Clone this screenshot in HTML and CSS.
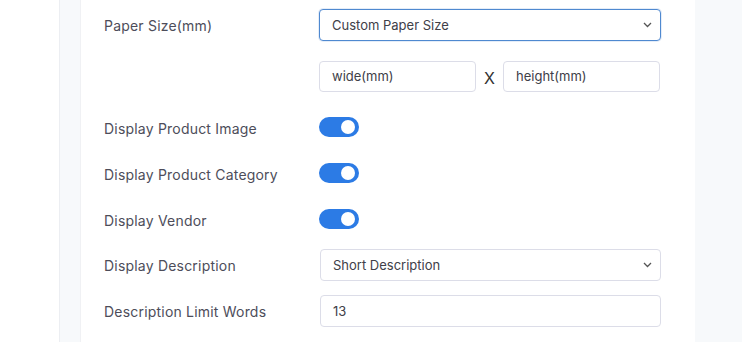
FILE: index.html
```html
<!DOCTYPE html>
<html lang="en">
<head>
  <meta charset="UTF-8" />
  <title>Label Settings</title>
  <link rel="stylesheet" href="styles.css">
</head>
<body>

  <div class="page">

    <!-- Left rail -->
    <div class="rail"></div>

    <!-- Main area -->
    <div class="main">
      <div class="card">

        <div class="row row-wide">
          <label class="label">Paper Size(mm)</label>
          <div class="control select-wrap">
            <select class="field select focused">
              <option>Custom Paper Size</option>
            </select>
            <svg class="chevron" width="9" height="6" viewBox="0 0 9 6"><path d="M1 1l3.5 3.5L8 1" fill="none" stroke="#555" stroke-width="1.3"/></svg>
          </div>
        </div>

        <div class="row row-wide">
          <span class="label"></span>
          <div class="control size-pair">
            <input class="field size" type="text" value="wide(mm)">
            <span class="times">X</span>
            <input class="field size" type="text" value="height(mm)">
          </div>
        </div>

        <div class="row switch-row">
          <label class="label">Display Product Image</label>
          <div class="control"><span class="toggle"></span></div>
        </div>

        <div class="row switch-row">
          <label class="label">Display Product Category</label>
          <div class="control"><span class="toggle"></span></div>
        </div>

        <div class="row switch-row">
          <label class="label">Display Vendor</label>
          <div class="control"><span class="toggle"></span></div>
        </div>

        <div class="row">
          <label class="label">Display Description</label>
          <div class="control select-wrap narrow">
            <select class="field select">
              <option>Short Description</option>
            </select>
            <svg class="chevron" width="9" height="6" viewBox="0 0 9 6"><path d="M1 1l3.5 3.5L8 1" fill="none" stroke="#555" stroke-width="1.3"/></svg>
          </div>
        </div>

        <div class="row">
          <label class="label">Description Limit Words</label>
          <div class="control narrow">
            <input class="field" type="text" value="13">
          </div>
        </div>

      </div>
    </div>

  </div>

</body>
</html>
```

FILE: styles.css
```css
body {
  margin: 0;
  font-family: Inter, "Noto Sans", sans-serif;
  color: #4a4a55;
  background: #f7f8fa;
}
.page {
  display: flex;
  height: 342px;
  overflow: hidden;
}
.rail {
  width: 59px;
  background: #fff;
  border-right: 1px solid #eceef2;
}
.main {
  flex: 1;
  padding-left: 20px;
  background: #f7f9fb;
}
.card {
  width: 591px;
  height: 100%;
  background: #fff;
  border-left: 1px solid #f0f1f4;
  padding: 9px 0 0 23px;
}
.row {
  display: flex;
  align-items: center;
  min-height: 32px;
  margin-bottom: 14px;
}
.row-wide {
  margin-bottom: 19px;
}
.label {
  width: 215px;
  font-size: 14px;
  letter-spacing: 0.2px;
  color: #4d4d5a;
}
.switch-row .label {
  padding-top: 3px;
}
.control {
  width: 342px;
}
.control.narrow {
  width: 341px;
  margin-left: 1px;
}
.field {
  box-sizing: border-box;
  width: 100%;
  height: 32px;
  padding: 0 12px;
  border: 1px solid #dcdde8;
  border-radius: 4px;
  font-family: inherit;
  font-size: 13px;
  color: #404048;
  background: #fff;
  outline: none;
}
.select-wrap {
  position: relative;
}
.select {
  appearance: none;
  -webkit-appearance: none;
}
.select.focused {
  border-color: #4f89d0;
  box-shadow: 0 0 0 1px rgba(79, 137, 208, 0.15);
}
.chevron {
  position: absolute;
  right: 9px;
  top: 13px;
}
.size-pair {
  display: flex;
  align-items: center;
}
.size-pair .size {
  width: 157px;
  height: 31px;
}
.times {
  width: 27px;
  text-align: center;
  font-size: 16px;
  color: #333;
  padding-top: 3px;
}
.toggle {
  display: block;
  position: relative;
  width: 40px;
  height: 20px;
  border-radius: 10px;
  background: #2c7be5;
}
.toggle::after {
  content: "";
  position: absolute;
  right: 4px;
  top: 3px;
  width: 14px;
  height: 14px;
  border-radius: 50%;
  background: #fff;
}
```
